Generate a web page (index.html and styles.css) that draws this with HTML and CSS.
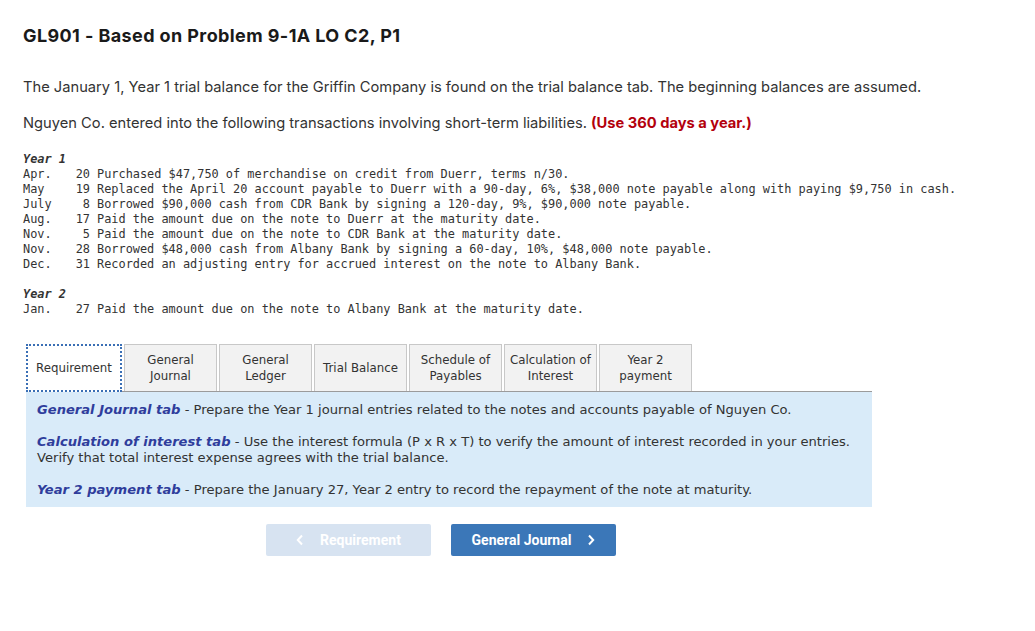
FILE: index.html
```html
<!DOCTYPE html>
<html>
<head>
<meta charset="utf-8">
<link rel="stylesheet" href="styles.css">
</head>
<body>
<div class="page">
  <h1 class="title">GL901 - Based on Problem 9-1A LO C2, P1</h1>
  <p class="intro">The January 1, Year 1 trial balance for the Griffin Company is found on the trial balance tab. The beginning balances are assumed.</p>
  <p class="intro second">Nguyen Co. entered into the following transactions involving short-term liabilities. <strong class="warn">(Use 360 days a year.)</strong></p>

  <div class="txns">
    <div class="year">Year 1</div>
    <div class="row"><span class="mon">Apr.</span><span class="day">20</span><span class="desc">Purchased $47,750 of merchandise on credit from Duerr, terms n/30.</span></div>
    <div class="row"><span class="mon">May</span><span class="day">19</span><span class="desc">Replaced the April 20 account payable to Duerr with a 90-day, 6%, $38,000 note payable along with paying $9,750 in cash.</span></div>
    <div class="row"><span class="mon">July</span><span class="day">8</span><span class="desc">Borrowed $90,000 cash from CDR Bank by signing a 120-day, 9%, $90,000 note payable.</span></div>
    <div class="row"><span class="mon">Aug.</span><span class="day">17</span><span class="desc">Paid the amount due on the note to Duerr at the maturity date.</span></div>
    <div class="row"><span class="mon">Nov.</span><span class="day">5</span><span class="desc">Paid the amount due on the note to CDR Bank at the maturity date.</span></div>
    <div class="row"><span class="mon">Nov.</span><span class="day">28</span><span class="desc">Borrowed $48,000 cash from Albany Bank by signing a 60-day, 10%, $48,000 note payable.</span></div>
    <div class="row"><span class="mon">Dec.</span><span class="day">31</span><span class="desc">Recorded an adjusting entry for accrued interest on the note to Albany Bank.</span></div>
    <div class="year year2">Year 2</div>
    <div class="row"><span class="mon">Jan.</span><span class="day">27</span><span class="desc">Paid the amount due on the note to Albany Bank at the maturity date.</span></div>
  </div>

  <div class="tabs-wrap">
    <div class="tabs">
      <div class="tab active">Requirement</div>
      <div class="tab">General<br>Journal</div>
      <div class="tab">General<br>Ledger</div>
      <div class="tab">Trial Balance</div>
      <div class="tab">Schedule of<br>Payables</div>
      <div class="tab">Calculation of<br>Interest</div>
      <div class="tab">Year 2<br>payment</div>
    </div>
    <div class="panel">
      <p><em class="lbl">General Journal tab</em> - Prepare the Year 1 journal entries related to the notes and accounts payable of Nguyen Co.</p>
      <p><em class="lbl">Calculation of interest tab</em> - Use the interest formula (P x R x T) to verify the amount of interest recorded in your entries.<br>Verify that total interest expense agrees with the trial balance.</p>
      <p><em class="lbl">Year 2 payment tab</em> - Prepare the January 27, Year 2 entry to record the repayment of the note at maturity.</p>
    </div>
    <div class="nav">
      <button class="btn disabled"><svg class="chev" width="8" height="12" viewBox="0 0 8 12"><path d="M6 1.5 L1.8 6 L6 10.5" fill="none" stroke="currentColor" stroke-width="2"/></svg><span>Requirement</span></button>
      <button class="btn primary"><span>General Journal</span><svg class="chev" width="8" height="12" viewBox="0 0 8 12"><path d="M2 1.5 L6.2 6 L2 10.5" fill="none" stroke="currentColor" stroke-width="2"/></svg></button>
    </div>
  </div>
</div>
</body>
</html>
```

FILE: styles.css
```css
html, body {
  margin: 0;
  padding: 0;
  background: #fff;
}
.page {
  padding: 25px 0 0 23px;
  font-family: "Inter", "Lato", sans-serif;
  color: #222;
}
.title {
  margin: 0;
  font-size: 18px;
  line-height: 22px;
  font-weight: 700;
  color: #1a1a1a;
  letter-spacing: 0.4px;
}
.intro {
  margin: 30px 0 0;
  font-size: 14.7px;
  line-height: 20px;
  color: #333;
}
.intro.second {
  margin-top: 16px;
}
.warn {
  color: #b3000c;
  font-weight: 700;
}
.txns {
  margin-top: 19px;
  font-family: "DejaVu Sans Mono", "Liberation Mono", monospace;
  font-size: 11.9px;
  line-height: 15px;
  color: #333;
}
.year {
  font-style: italic;
  font-weight: 700;
}
.year2 {
  margin-top: 15px;
}
.row {
  display: flex;
  white-space: pre;
}
.mon {
  width: 51px;
}
.day {
  width: 16px;
  text-align: right;
}
.desc {
  margin-left: 7px;
}
.tabs-wrap {
  margin: 27px 0 0 3px;
  width: 846px;
}
.tabs {
  display: flex;
  gap: 2px;
  border-bottom: 1px solid #9b9b9b;
  align-items: flex-end;
}
.tab {
  box-sizing: border-box;
  width: 93px;
  height: 47px;
  display: flex;
  align-items: center;
  justify-content: center;
  text-align: center;
  font-family: "DejaVu Sans", Verdana, sans-serif;
  font-size: 11.8px;
  line-height: 16px;
  color: #333;
  background: #f2f2f2;
  border: 1px solid #c8c8c8;
  border-bottom: none;
}
.tab.active {
  width: 96px;
  height: 48px;
  margin-bottom: -1px;
  background: #fff;
  border: 2px dotted #3a6fb5;
}
.panel {
  background: #d9ebf9;
  padding: 10px 11px 9px;
  font-family: "DejaVu Sans", Verdana, sans-serif;
  font-size: 13.1px;
  line-height: 16px;
  color: #333;
}
.panel p {
  margin: 0 0 16px;
}
.panel p:last-child {
  margin-bottom: 0;
}
.lbl {
  font-weight: 700;
  font-style: italic;
  color: #2f3d9c;
}
.nav {
  display: flex;
  gap: 20px;
  margin-top: 17px;
  padding-left: 240px;
}
.btn {
  width: 165px;
  height: 32px;
  border: none;
  border-radius: 2px;
  display: flex;
  align-items: center;
  justify-content: center;
  gap: 16px;
  font-family: "Roboto", "Liberation Sans", sans-serif;
  font-weight: 700;
  font-size: 14px;
  color: #fff;
  padding: 0;
}
.btn.disabled {
  background: #d7e3f1;
}
.btn.primary {
  background: #3b77b8;
}
.chev {
  display: block;
}
```
